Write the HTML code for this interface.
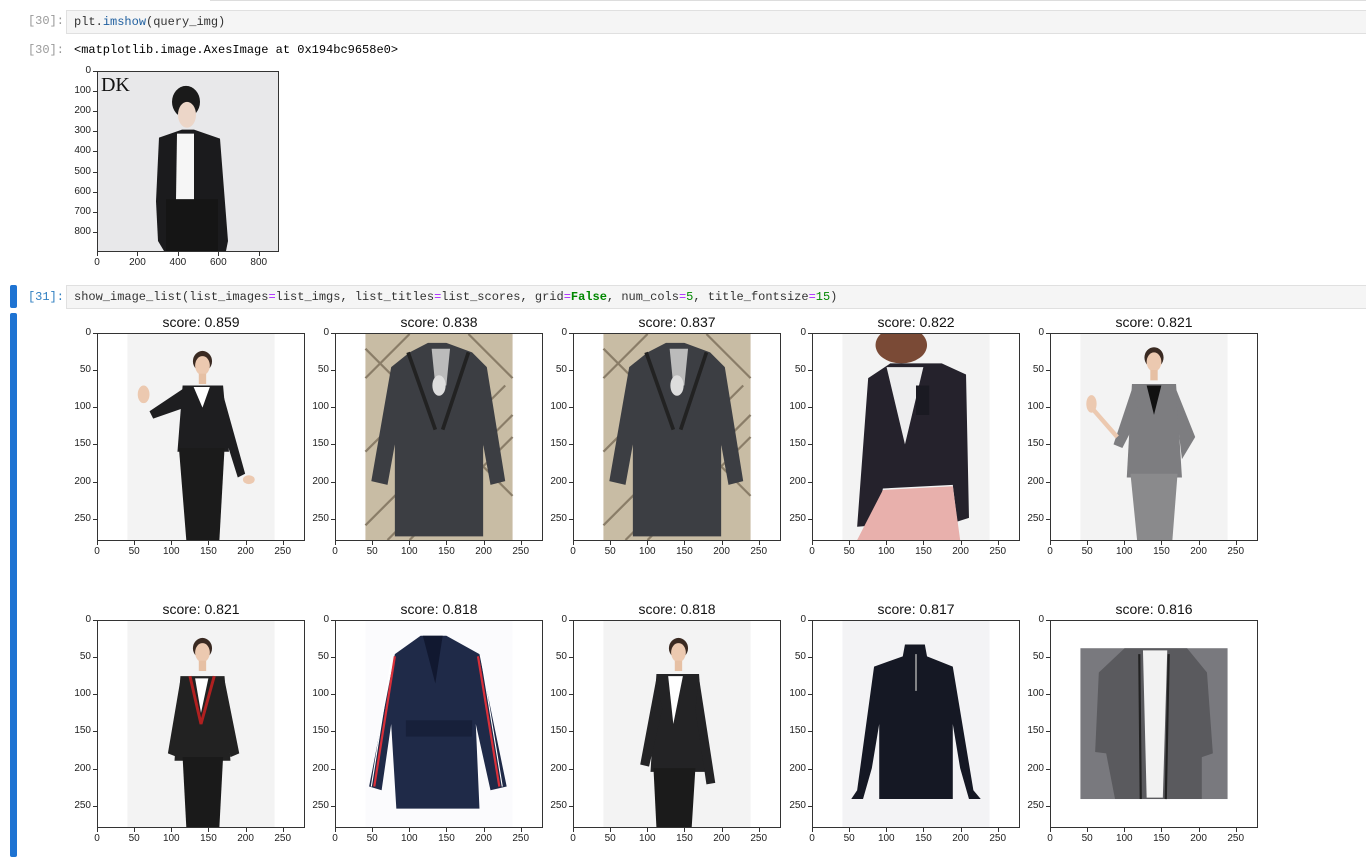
<!DOCTYPE html>
<html><head><meta charset="utf-8"><style>
body{margin:0;width:1366px;height:857px;background:#fff;position:relative;overflow:hidden;font-family:"Liberation Sans",sans-serif}
.a{position:absolute}
.cell{position:absolute;left:66px;right:-2px;background:#f5f5f5;border:1px solid #e0e0e0;height:22px;font:12px/22px "Liberation Mono",monospace;padding-left:7px;color:#333;white-space:pre}
.pr{position:absolute;font:12px/14px "Liberation Mono",monospace;color:#999;width:62px;text-align:right;left:2px}
.tk{position:absolute;font-size:10px;color:#222;line-height:10px}
.ttl{position:absolute;font-size:14px;color:#111;text-align:center;width:208px}
.bar{position:absolute;left:10px;width:7px;background:#1e73d2;border-radius:2px}
.ax{position:absolute;border:1px solid #333;box-sizing:border-box;overflow:hidden}
.ax svg{display:block;width:100%;height:100%}
</style></head><body>
<div class="a" style="left:210px;top:0;right:0;height:1px;background:#ddd"></div>
<div class="pr" style="top:14px">[30]:</div>
<div class="cell" style="top:10px">plt.<span style="color:#2060a0">imshow</span>(query_img)</div>
<div class="pr" style="top:43px">[30]:</div>
<div class="a" style="left:74px;top:43px;font:12px/14px 'Liberation Mono',monospace;color:#000">&lt;matplotlib.image.AxesImage at 0x194bc9658e0&gt;</div>
<div class="bar" style="top:285px;height:23px"></div>
<div class="bar" style="top:313px;height:544px"></div>
<div class="pr" style="top:290px;color:#307fc1">[31]:</div>
<div class="cell" style="top:285px">show_image_list(list_images<span style="color:#a2f">=</span>list_imgs, list_titles<span style="color:#a2f">=</span>list_scores, grid<span style="color:#a2f">=</span><span style="color:#080;font-weight:bold">False</span>, num_cols<span style="color:#a2f">=</span><span style="color:#080">5</span>, title_fontsize<span style="color:#a2f">=</span><span style="color:#080">15</span>)</div>
<div id="root"></div>
<script>
var root=document.getElementById('root');
function el(h){var d=document.createElement('div');d.innerHTML=h;root.appendChild(d.firstChild);}
function axes(x,y,w,h,range,ticks,xticks,svg,title){
 el('<div class="ax" style="left:'+x+'px;top:'+y+'px;width:'+w+'px;height:'+h+'px"><svg viewBox="0 0 '+range+' '+range+'" preserveAspectRatio="none">'+svg+'</svg></div>');
 ticks.forEach(function(t){
  var py=y+t*h/range;
  el('<div class="a" style="left:'+(x-4)+'px;top:'+py+'px;width:4px;height:1px;background:#333"></div>');
  el('<div class="tk" style="left:'+(x-46)+'px;width:40px;text-align:right;top:'+(py-5)+'px">'+t+'</div>');
 });
 xticks.forEach(function(t){
  var px=x+t*w/range;
  el('<div class="a" style="left:'+px+'px;top:'+(y+h)+'px;width:1px;height:4px;background:#333"></div>');
  el('<div class="tk" style="left:'+(px-20)+'px;width:40px;text-align:center;top:'+(y+h+6)+'px">'+t+'</div>');
 });
 if(title) el('<div class="ttl" style="left:'+x+'px;top:'+(y-19)+'px">'+title+'</div>');
}
var bgG='<rect x="40" y="0" width="200" height="280" fill="#f3f3f3"/>';
function head(cx,cy,hair){return '<ellipse cx="'+cx+'" cy="'+(cy-3)+'" rx="13" ry="14" fill="'+(hair||'#3a2a22')+'"/><ellipse cx="'+cx+'" cy="'+(cy+3)+'" rx="10" ry="13" fill="#ecc9b0"/><rect x="'+(cx-5)+'" y="'+(cy+14)+'" width="10" height="14" fill="#e6c0a4"/>';}
function woman(j,sk,arm){return bgG+head(142,40)+
 '<polygon points="115,70 170,70 178,160 108,160" fill="'+j+'"/>'+
 '<polygon points="130,72 152,72 142,100" fill="#fff"/>'+
 '<polygon points="110,155 172,155 165,280 120,280" fill="'+sk+'"/>'+
 (arm?'<polygon points="115,75 70,105 75,115 118,100" fill="'+j+'"/><ellipse cx="62" cy="82" rx="8" ry="12" fill="#ecc9b0"/>':'<polygon points="112,75 100,210 110,212 122,110" fill="'+j+'"/>')+
 '<polygon points="168,75 200,190 190,195 165,115" fill="'+j+'"/><ellipse cx="205" cy="198" rx="8" ry="6" fill="#ecc9b0"/>';}
var coat='<rect x="40" y="0" width="200" height="280" fill="#c8bca4"/>'+
 '<path d="M40 60 L100 0 M40 160 L160 40 M40 260 L230 70 M100 280 L240 140 M180 0 L240 60 M40 20 L240 220 M70 280 L240 110" stroke="#8a7d68" stroke-width="3" fill="none"/>'+
 '<polygon points="125,12 150,12 185,25 205,45 230,200 210,205 200,150 200,275 80,275 80,150 70,205 48,200 75,45 100,25" fill="#3c3e43"/>'+
 '<polygon points="130,20 155,20 150,70 135,70" fill="#bbb"/><ellipse cx="140" cy="70" rx="9" ry="14" fill="#ddd"/>'+
 '<path d="M98 25 L135 130 M180 25 L145 130" stroke="#222" stroke-width="5"/>';
var w4='<rect x="40" y="0" width="200" height="280" fill="#f3f3f3"/><ellipse cx="120" cy="15" rx="35" ry="25" fill="#7a4a36"/>'+
 '<polygon points="75,60 105,40 175,40 208,55 212,250 196,255 190,205 95,210 85,260 60,262" fill="#25222c"/>'+
 '<polygon points="100,45 150,45 125,150" fill="#eeeeef"/><polygon points="95,212 190,207 200,280 60,280" fill="#e8b0ac"/>'+
 '<rect x="140" y="70" width="18" height="40" fill="#1a1a22"/>';
var w5=bgG+head(140,35)+
 '<polygon points="110,68 170,68 178,195 103,195" fill="#7d7d80"/><polygon points="130,70 150,70 140,110" fill="#111"/>'+
 '<polygon points="108,190 172,190 165,280 117,280" fill="#8a8a8c"/>'+
 '<polygon points="110,75 85,150 97,155 120,110" fill="#7d7d80"/><polygon points="170,75 196,140 178,170 172,120" fill="#7d7d80"/>'+
 '<ellipse cx="55" cy="95" rx="7" ry="12" fill="#ecc9b0"/><path d="M55 100 L90 140" stroke="#ecc9b0" stroke-width="6"/>';
var w6=bgG+head(142,40)+
 '<polygon points="112,75 172,75 180,190 104,190" fill="#222"/><path d="M125 75 L140 140 L158 75" stroke="#b02020" stroke-width="4" fill="none"/>'+
 '<polygon points="132,78 150,78 140,125" fill="#fff"/><polygon points="115,185 170,185 165,280 120,280" fill="#1a1a1a"/>'+
 '<polygon points="112,80 95,180 108,185 122,115" fill="#222"/><polygon points="172,80 192,180 180,185 165,115" fill="#222"/>';
var navy='<rect x="40" y="0" width="200" height="280" fill="#fbfbfd"/>'+
 '<polygon points="115,20 150,20 195,45 232,225 210,230 190,140 195,255 82,255 75,140 62,230 45,225 80,45" fill="#1f2a48"/>'+
 '<path d="M80 48 L52 225 M193 48 L222 225" stroke="#d8303a" stroke-width="3"/><path d="M76 48 L48 225 M197 48 L226 225" stroke="#fff" stroke-width="1.5"/>'+
 '<rect x="95" y="135" width="90" height="22" fill="#17203a"/><polygon points="118,20 145,20 135,85" fill="#111830"/>';
var w8=bgG+head(142,40)+
 '<polygon points="112,72 170,72 178,205 104,205" fill="#232325"/><polygon points="128,75 148,75 135,140" fill="#fff"/>'+
 '<polygon points="108,200 165,200 160,280 112,280" fill="#1b1b1b"/>'+
 '<polygon points="112,78 90,195 102,198 120,120" fill="#232325"/><polygon points="170,78 192,220 180,222 165,120" fill="#232325"/>';
var sweater='<rect x="40" y="0" width="200" height="280" fill="#f3f3f5"/>'+
 '<polygon points="125,32 152,32 155,48 190,62 218,230 228,242 212,242 200,200 190,140 190,242 90,242 90,140 80,200 68,242 52,242 60,230 83,62 122,48" fill="#151824"/>'+
 '<path d="M140 45 L140 95" stroke="#aaa" stroke-width="2"/>';
var card='<rect x="40" y="37" width="200" height="205" fill="#79797e"/>'+
 '<polygon points="100,37 185,37 212,70 220,180 205,185 205,242 87,242 75,180 60,178 65,70" fill="#5a5a5e"/>'+
 '<polygon points="125,40 158,40 152,240 130,240" fill="#f2f2f2"/><path d="M120 45 L122 242 M160 45 L156 242" stroke="#222" stroke-width="3"/>';

axes(97,71,182,181,900,[0,100,200,300,400,500,600,700,800],[0,200,400,600,800],
 '<rect width="900" height="900" fill="#e8e8ea"/><text x="15" y="95" font-family="Liberation Serif" font-size="100" fill="#111">DK</text>'+
 '<ellipse cx="440" cy="150" rx="70" ry="80" fill="#1a1a1a"/><ellipse cx="445" cy="215" rx="45" ry="65" fill="#ecd6c8"/>'+
 '<polygon points="305,330 420,290 480,290 610,335 650,850 640,900 330,900 300,850 290,650" fill="#1b1b1d"/>'+
 '<polygon points="395,310 480,310 480,640 390,640" fill="#f6f6f6"/><rect x="340" y="640" width="260" height="260" fill="#151515"/>'
 ,'');
var r1=[97,335,573,812,1050];
var t=[0,50,100,150,200,250];
var imgs1=[woman('#1e1e20','#1b1b1b',true),coat,coat,w4,w5];
var s1=['0.859','0.838','0.837','0.822','0.821'];
var imgs2=[w6,navy,w8,sweater,card];
var s2=['0.821','0.818','0.818','0.817','0.816'];
for(var i=0;i<5;i++){axes(r1[i],333,208,208,280,t,t,imgs1[i],'score: '+s1[i]);axes(r1[i],620,208,208,280,t,t,imgs2[i],'score: '+s2[i]);}
</script>
</body></html>
